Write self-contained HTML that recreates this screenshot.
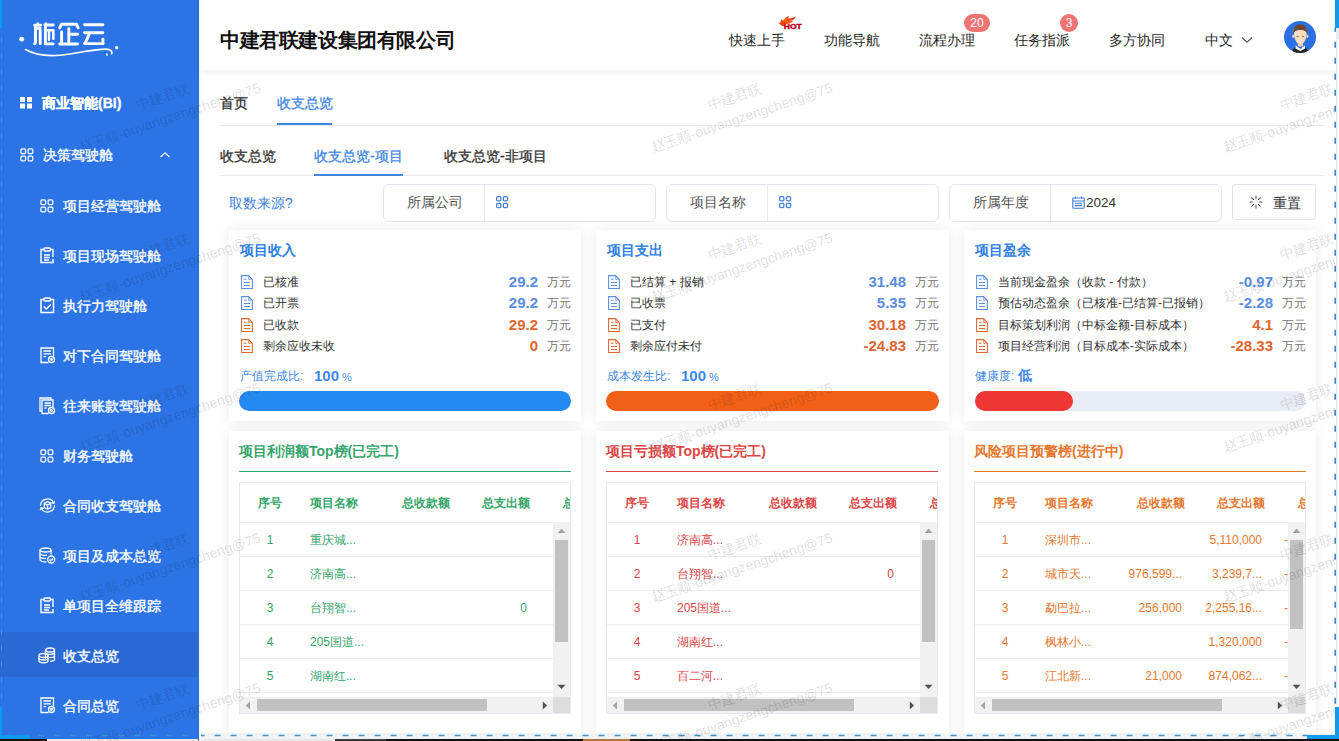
<!DOCTYPE html>
<html><head><meta charset="utf-8">
<style>
*{margin:0;padding:0;box-sizing:border-box;}
html,body{width:1339px;height:741px;overflow:hidden;background:#fff;font-family:"Liberation Sans",sans-serif;position:relative;}
.a{position:absolute;white-space:nowrap;}
#side{position:absolute;left:0;top:0;width:199px;height:741px;background:#2c74e6;color:#fff;}
.mi{position:absolute;left:0;width:199px;height:50px;}
.mi .t{position:absolute;top:15px;font-size:14px;line-height:20px;font-weight:500;color:#fff;white-space:nowrap;-webkit-text-stroke:0.35px #fff;}
.md{-webkit-text-stroke:0.3px currentColor;}
.mi svg{position:absolute;}
#hdr{position:absolute;left:199px;top:0;width:1140px;height:70px;background:#fff;box-shadow:0 2px 7px rgba(0,0,0,0.07);}
.nav{position:absolute;top:31px;font-size:13.5px;line-height:20px;color:#262626;white-space:nowrap;}
.badge{position:absolute;height:18px;border-radius:9px;background:#ef7474;color:#fff;font-size:12px;line-height:18px;text-align:center;}
.t14{font-size:14px;line-height:20px;}
.card{position:absolute;background:#fff;box-shadow:0 0 12px rgba(0,0,0,0.085);}
.box{position:absolute;top:184px;height:38px;border:1px solid #e3e6ec;border-radius:6px;background:#fff;}
.box .lb{position:absolute;top:8px;font-size:13.5px;line-height:20px;color:#555;}
.box .dv{position:absolute;top:0;width:1px;height:36px;background:#e8ebf0;}
.ct{position:absolute;top:10px;left:11px;font-size:14px;line-height:20px;font-weight:bold;}
.row{position:absolute;left:11px;right:10px;height:20px;}
.row svg{position:absolute;left:1px;top:3px;}
.row .l{position:absolute;left:23px;top:0;font-size:12px;line-height:20px;color:#333;}
.row .v{position:absolute;right:33px;top:0;font-size:15px;line-height:20px;font-weight:bold;}
.row .u{position:absolute;right:0;top:0;font-size:12px;line-height:20px;color:#777;}
.ttl{position:absolute;left:10px;top:10px;font-size:14px;line-height:20px;font-weight:bold;}
.uline{position:absolute;left:10px;top:40px;width:332px;height:1px;}
.tbl{position:absolute;left:10px;top:51px;width:332px;height:232px;border:1px solid #e6e9ef;overflow:hidden;}
.th{position:absolute;top:13px;font-size:12px;line-height:20px;font-weight:bold;}
.td{position:absolute;font-size:12px;line-height:20px;}
.rl{position:absolute;left:0;width:314px;height:1px;background:#e9ecf1;}
.wmk{position:absolute;width:300px;height:44px;text-align:center;font-size:14px;line-height:22px;color:rgba(0,0,0,0.14);transform:rotate(-18.5deg);white-space:nowrap;}
</style></head><body>

<!-- ============ SIDEBAR ============ -->
<div id="side">
  <svg class="a" style="left:0;top:0;" width="130" height="65" viewBox="0 0 130 65">
    <circle cx="21.7" cy="39.2" r="2.4" fill="#fff"/>
    <circle cx="116.7" cy="47.8" r="1.7" fill="#fff"/>
    <circle cx="106.9" cy="54.6" r="1.1" fill="#fff"/>
    <path d="M25.5 49.6 C 36 55.5, 50 57.5, 70 54 C 85 51.5, 100 48.5, 108 49.3 C 111 49.8, 112.5 51.5, 111.7 53.8" stroke="#fff" stroke-width="1.7" fill="none" stroke-linecap="round"/>
    <g stroke="#fff" stroke-width="2.9" fill="none" stroke-linecap="round" stroke-linejoin="round">
      <path d="M34.7 25.2 H40.6"/>
      <path d="M37.7 23.4 V25" stroke-width="2.2"/>
      <path d="M35.5 26.5 V42.5 L34.6 43.8"/>
      <path d="M38.3 28.4 H40.2 V43.7"/>
      <path d="M44.9 25 H53.2"/>
      <path d="M45.9 23.3 V25" stroke-width="2.2"/>
      <path d="M45.4 27 V43.9 H53.2"/>
      <path d="M47.6 30.3 H53.3 V38.8" stroke-width="2.6"/>
      <path d="M49 31.5 V39.8" stroke-width="2.4"/>
      <path d="M59.7 27.9 L61.4 24.3 H76.6 L78.2 27.8"/>
      <path d="M68.8 28.6 V43"/>
      <path d="M61.6 32 V42.2"/>
      <path d="M71 34.2 H77.6"/>
      <path d="M59.8 44 H77.6"/>
      <path d="M84.6 24.7 H102.9"/>
      <path d="M84.6 32.8 H102.9"/>
      <path d="M89.3 34 L85.1 43.4"/>
      <path d="M84.6 43.6 H102.9"/>
      <path d="M102.9 39.3 V43.6"/>
    </g>
  </svg>

  <div class="mi" style="top:78px;">
    <svg style="left:20px;top:19px;" width="13" height="12" viewBox="0 0 13 12"><rect x="0" y="0" width="5" height="5" fill="#fff"/><rect x="7" y="0" width="5" height="5" fill="#fff"/><rect x="0" y="6.5" width="5" height="5" fill="#fff"/><rect x="7" y="6.5" width="5" height="5" fill="#fff"/></svg>
    <span class="t" style="left:42px;font-weight:bold;">商业智能(BI)</span></div>

  <div class="mi" style="top:130px;">
    <svg style="left:19.5px;top:18px;" width="14" height="14" viewBox="0 0 14 14" fill="none" stroke="#fff" stroke-width="1.25"><rect x="0.9" y="0.9" width="4.7" height="4.7" rx="1.1"/><rect x="8.1" y="0.9" width="4.7" height="4.7" rx="1.1"/><rect x="0.9" y="8.1" width="4.7" height="4.7" rx="1.1"/><rect x="8.1" y="8.1" width="4.7" height="4.7" rx="1.1"/></svg>
    <span class="t" style="left:43px;">决策驾驶舱</span>
    <svg style="left:159px;top:21px;" width="12" height="8" viewBox="0 0 12 8"><path d="M1.5 6 L6 1.8 L10.5 6" stroke="#fff" stroke-width="1.2" fill="none"/></svg>
  </div>

  <div class="mi" style="top:181px;">
    <svg style="left:39.5px;top:18px;" width="14" height="14" viewBox="0 0 14 14" fill="none" stroke="#fff" stroke-width="1.25"><rect x="0.9" y="0.9" width="4.7" height="4.7" rx="1.1"/><rect x="8.1" y="0.9" width="4.7" height="4.7" rx="1.1"/><rect x="0.9" y="8.1" width="4.7" height="4.7" rx="1.1"/><rect x="8.1" y="8.1" width="4.7" height="4.7" rx="1.1"/></svg>
    <span class="t" style="left:63px;">项目经营驾驶舱</span></div>

  <div class="mi" style="top:231px;">
    <svg style="left:40px;top:16px;" width="15" height="17" viewBox="0 0 15 17" fill="none" stroke="#fff" stroke-width="1.4"><path d="M4 2.5 H1 V15.5 H13 V12"/><path d="M10.5 2.5 H13 V10"/><rect x="4" y="1" width="6.5" height="3" rx="1"/><path d="M4 8 H10 M4 10.5 H10 M4 13 H9"/></svg>
    <span class="t" style="left:63px;">项目现场驾驶舱</span></div>

  <div class="mi" style="top:281px;">
    <svg style="left:40px;top:16px;" width="15" height="17" viewBox="0 0 15 17" fill="none" stroke="#fff" stroke-width="1.5"><path d="M4 2.5 H1 V15.5 H13.5 V2.5 H10.5"/><rect x="4" y="1" width="6.5" height="3" rx="1"/><path d="M3.8 9.5 L6.3 12 L10.8 7.5"/></svg>
    <span class="t" style="left:63px;">执行力驾驶舱</span></div>

  <div class="mi" style="top:331px;">
    <svg style="left:40px;top:16px;" width="16" height="17" viewBox="0 0 16 17" fill="none" stroke="#fff" stroke-width="1.3"><path d="M8.5 15.5 H1 V1 H13.5 V9"/><path d="M3.5 4 H11 M3.5 6.8 H11 M3.5 9.6 H6"/><circle cx="11.5" cy="12.5" r="3"/><circle cx="11.5" cy="12.5" r="0.8" fill="#fff"/></svg>
    <span class="t" style="left:63px;">对下合同驾驶舱</span></div>

  <div class="mi" style="top:381px;">
    <svg style="left:39px;top:16px;" width="17" height="18" viewBox="0 0 17 18" fill="none" stroke="#fff" stroke-width="1.3"><path d="M3 14 H1 V1 H12 V2.5"/><path d="M9.5 16.5 H3 V3 H14 V10"/><path d="M5.5 6 H12 M5.5 8.5 H12 M5.5 11 H7.5"/><circle cx="12.5" cy="13.5" r="3"/><circle cx="12.5" cy="13.5" r="0.8" fill="#fff"/></svg>
    <span class="t" style="left:63px;">往来账款驾驶舱</span></div>

  <div class="mi" style="top:431px;">
    <svg style="left:39.5px;top:18px;" width="14" height="14" viewBox="0 0 14 14" fill="none" stroke="#fff" stroke-width="1.25"><rect x="0.9" y="0.9" width="4.7" height="4.7" rx="1.1"/><rect x="8.1" y="0.9" width="4.7" height="4.7" rx="1.1"/><rect x="0.9" y="8.1" width="4.7" height="4.7" rx="1.1"/><rect x="8.1" y="8.1" width="4.7" height="4.7" rx="1.1"/></svg>
    <span class="t" style="left:63px;">财务驾驶舱</span></div>

  <div class="mi" style="top:481px;">
    <svg style="left:39px;top:16px;" width="17" height="17" viewBox="0 0 17 17" fill="none" stroke="#fff" stroke-width="1.2" stroke-linecap="round" stroke-linejoin="round"><path d="M1.5 8.5 A7 7 0 0 1 14.8 6"/><path d="M12.8 5.6 L14.9 6.3 L15.7 4.2"/><path d="M15.5 8.5 A7 7 0 0 1 2.2 11"/><path d="M4.2 11.4 L2.1 10.7 L1.3 12.8"/><path d="M8.5 4.6 L11.8 6.4 V10.4 L8.5 12.2 L5.2 10.4 V6.4 Z M5.2 6.4 L8.5 8.2 L11.8 6.4 M8.5 8.2 V12.2"/></svg>
    <span class="t" style="left:63px;">合同收支驾驶舱</span></div>

  <div class="mi" style="top:531px;">
    <svg style="left:39px;top:16px;" width="17" height="17" viewBox="0 0 17 17" fill="none" stroke="#fff" stroke-width="1.3"><ellipse cx="6.5" cy="3" rx="5.5" ry="2"/><path d="M1 3 V12.5 C1 14 4 15 7.5 14.8"/><path d="M12 3 V7.5"/><path d="M1 6.3 C1 8 5 8.6 8 8.2"/><path d="M1 9.5 C1 11 4 11.6 7 11.4"/><circle cx="12.2" cy="12.5" r="3.5"/><path d="M10.5 12.6 L11.8 13.8 L14 11.5"/></svg>
    <span class="t" style="left:63px;">项目及成本总览</span></div>

  <div class="mi" style="top:581px;">
    <svg style="left:40px;top:16px;" width="15" height="17" viewBox="0 0 15 17" fill="none" stroke="#fff" stroke-width="1.4"><path d="M4 2.5 H1 V15.5 H13 V12"/><path d="M10.5 2.5 H13 V10"/><rect x="4" y="1" width="6.5" height="3" rx="1"/><path d="M4 8 H10 M4 10.5 H10 M4 13 H9"/></svg>
    <span class="t" style="left:63px;">单项目全维跟踪</span></div>

  <div class="mi" style="top:632px;height:45px;background:#2a69d3;">
    <svg style="left:38px;top:15px;" width="18" height="17" viewBox="0 0 18 17" fill="none" stroke="#fff" stroke-width="1.3"><ellipse cx="12" cy="3" rx="4.5" ry="2"/><path d="M7.5 3 V12 M16.5 3 V12.5 C16.5 13.5 14.5 14.3 12 14.3"/><path d="M7.5 6 C8 7 10 7.3 12 7.3 C14.5 7.3 16.5 6.5 16.5 6"/><path d="M11 10.5 C13 10.6 16 10 16.5 9.3"/><ellipse cx="5.5" cy="8.5" rx="4.5" ry="2"/><path d="M1 8.5 V14 C1 15 3 15.8 5.5 15.8 C8 15.8 10 15 10 14 V8.5"/><path d="M1 11.3 C1 12.3 3 13 5.5 13 C8 13 10 12.3 10 11.3"/></svg>
    <span class="t" style="left:63px;top:14px;">收支总览</span></div>

  <div class="mi" style="top:681px;">
    <svg style="left:40px;top:16px;" width="16" height="17" viewBox="0 0 16 17" fill="none" stroke="#fff" stroke-width="1.3"><path d="M8.5 15.5 H1 V1 H13.5 V9"/><path d="M3.5 4 H11 M3.5 6.8 H11 M3.5 9.6 H6"/><circle cx="11.5" cy="12.5" r="3"/><circle cx="11.5" cy="12.5" r="0.8" fill="#fff"/></svg>
    <span class="t" style="left:63px;">合同总览</span></div>
</div>

<div class="a" style="left:198px;top:0;width:1px;height:741px;background:#3a6cc2;z-index:5;"></div>
<div class="a" style="left:199px;top:0;width:1px;height:741px;background:#e4fbff;z-index:5;"></div>
<div class="a" style="left:200px;top:0;width:1px;height:741px;background:#f4feff;z-index:5;"></div>
<!-- ============ HEADER ============ -->
<div id="hdr">
  <div class="a" style="left:21px;top:26px;font-size:20px;font-weight:bold;line-height:28px;color:#111;letter-spacing:-0.4px;">中建君联建设集团有限公司</div>
  <div class="nav" style="left:530px;">快速上手</div>
  <svg class="a" style="left:578px;top:15px;" width="27" height="16" viewBox="0 0 27 16"><defs><linearGradient id="fl" x1="0" y1="1" x2="1" y2="0"><stop offset="0" stop-color="#d01a0a"/><stop offset="0.5" stop-color="#f86010"/><stop offset="1" stop-color="#e02010"/></linearGradient></defs><path d="M0.4 7.1 L3 8.2 L4.5 4.1 L6.3 5.6 C8 3.2 10 1.6 11.9 1.1 L11.2 3.6 C14 3.6 17 2.6 19 1.6 C18 4 16 5.5 13.5 6.1 L16.3 6.7 C14 8 11.5 8.6 9.2 9 L5.5 11.2 C4 10 2 8.5 0.4 7.1 Z" fill="url(#fl)"/><text x="6.8" y="13.9" font-family="Liberation Sans" font-weight="bold" font-size="7.2" textLength="18" lengthAdjust="spacingAndGlyphs" fill="#c2001c" stroke="#c2001c" stroke-width="0.45">HOT</text></svg>
  <div class="nav" style="left:625px;">功能导航</div>
  <div class="nav" style="left:720px;">流程办理</div>
  <div class="badge" style="left:765px;top:14px;width:26px;">20</div>
  <div class="nav" style="left:815px;">任务指派</div>
  <div class="badge" style="left:861px;top:14px;width:18px;">3</div>
  <div class="nav" style="left:910px;">多方协同</div>
  <div class="nav" style="left:1006px;">中文</div>
  <svg class="a" style="left:1042px;top:36px;" width="12" height="8" viewBox="0 0 12 8"><path d="M1 1.5 L6 6.3 L11 1.5" stroke="#444" stroke-width="1.05" fill="none"/></svg>
  <svg class="a" style="left:1085px;top:21px;" width="32" height="32" viewBox="0 0 32 32">
    <defs><clipPath id="cc"><circle cx="16" cy="16" r="16"/></clipPath></defs>
    <circle cx="16" cy="16" r="16" fill="#2b70e2"/>
    <g clip-path="url(#cc)">
      <path d="M7.5 33 C8 28.5 10.5 26.5 13 25.5 L16.3 29 L19.5 25.5 C22 26.5 24.5 28.5 25 33 Z" fill="#252525"/>
      <rect x="13.8" y="20.5" width="5.2" height="5" fill="#f1cfb2"/>
      <path d="M11.8 24.5 L16.3 28 L20.8 24.5 L21.2 27.5 L16.3 30 L11.4 27.5 Z" fill="#fff"/>
      <ellipse cx="9.3" cy="15.3" rx="1.1" ry="1.8" fill="#efcdb0"/>
      <ellipse cx="23.3" cy="15.3" rx="1.1" ry="1.8" fill="#efcdb0"/>
      <path d="M9.7 8 C9.6 18.5 12.5 23.2 16.3 23.2 C20.1 23.2 23 18.5 22.9 8 Z" fill="#f8dcc2"/>
      <path d="M9.4 13.5 C8.8 7 11 3.2 16.3 3.2 C21.6 3.2 23.8 7 23.2 13.5 C22.5 10.5 21 9 16.3 9 C11.6 9 10.1 10.5 9.4 13.5 Z" fill="#6e4a35"/>
      <path d="M12.4 15.6 H14.6 M18 15.6 H20.2" stroke="#6a5040" stroke-width="0.8"/>
    </g>
  </svg>
</div>

<!-- ============ TABS ============ -->
<div class="a t14 md" style="left:220px;top:93px;color:#333;">首页</div>
<div class="a t14 md" style="left:277px;top:93px;color:#3f87e5;">收支总览</div>
<div class="a" style="left:219px;top:125px;width:1106px;height:1px;background:#e9ebef;"></div>
<div class="a" style="left:277px;top:123px;width:55px;height:2px;background:#3f87e5;"></div>
<div class="a t14 md" style="left:220px;top:146px;color:#333;">收支总览</div>
<div class="a t14 md" style="left:314px;top:146px;color:#3f87e5;">收支总览-项目</div>
<div class="a t14 md" style="left:444px;top:146px;color:#333;">收支总览-非项目</div>
<div class="a" style="left:219px;top:175px;width:1106px;height:1px;background:#e9ebef;"></div>
<div class="a" style="left:314px;top:174px;width:89px;height:2px;background:#3f87e5;"></div>

<!-- ============ FILTERS ============ -->
<div class="a t14" style="left:229px;top:193px;color:#3f7fd9;">取数来源?</div>
<div class="box" style="left:383px;width:273px;">
  <span class="lb" style="left:23px;">所属公司</span><div class="dv" style="left:100px;"></div>
  <svg class="a" style="left:112px;top:11px;" width="13" height="13" viewBox="0 0 13 13" fill="none" stroke="#4a80d6" stroke-width="1.3"><rect x="0.65" y="0.65" width="4.2" height="4.2" rx="1"/><rect x="7.35" y="0.65" width="4.2" height="4.2" rx="1"/><rect x="0.65" y="7.35" width="4.2" height="4.2" rx="1"/><rect x="7.35" y="7.35" width="4.2" height="4.2" rx="1"/></svg>
</div>
<div class="box" style="left:666px;width:273px;">
  <span class="lb" style="left:23px;">项目名称</span><div class="dv" style="left:100px;"></div>
  <svg class="a" style="left:112px;top:11px;" width="13" height="13" viewBox="0 0 13 13" fill="none" stroke="#4a80d6" stroke-width="1.3"><rect x="0.65" y="0.65" width="4.2" height="4.2" rx="1"/><rect x="7.35" y="0.65" width="4.2" height="4.2" rx="1"/><rect x="0.65" y="7.35" width="4.2" height="4.2" rx="1"/><rect x="7.35" y="7.35" width="4.2" height="4.2" rx="1"/></svg>
</div>
<div class="box" style="left:949px;width:273px;">
  <span class="lb" style="left:23px;">所属年度</span><div class="dv" style="left:100px;"></div>
  <svg class="a" style="left:122px;top:11px;" width="13" height="13" viewBox="0 0 13 13" fill="none" stroke="#3f7fd9" stroke-width="1.1"><rect x="0.8" y="2" width="11.4" height="10.2" rx="0.8"/><path d="M0.8 5 H12.2 M3.5 0.5 V2.5 M9.5 0.5 V2.5 M3 7.2 H10 M3 9.6 H10"/></svg>
  <span class="a" style="left:136px;top:8px;font-size:13.5px;line-height:20px;color:#333;">2024</span>
</div>
<div class="a" style="left:1232px;top:184px;width:84px;height:36px;border:1px solid #dfe3e9;border-radius:3px;background:#fff;">
  <svg class="a" style="left:16px;top:10px;" width="14" height="14" viewBox="0 0 14 14" stroke="#555" stroke-width="1.1" stroke-linecap="round"><path d="M7 1 V3.5 M7 10.5 V13 M1 7 H3.5 M10.5 7 H13 M2.8 2.8 L4.5 4.5 M9.5 9.5 L11.2 11.2 M2.8 11.2 L4.5 9.5 M9.5 4.5 L11.2 2.8"/></svg>
  <span class="a" style="left:40px;top:8px;font-size:14px;line-height:20px;color:#333;">重置</span>
</div>

<!-- ============ CARDS ROW 1 ============ -->
<div class="card" style="left:229px;top:230px;width:352px;height:191px;">
  <div class="ct" style="color:#2f80e4;">项目收入</div>
<div class="row" style="top:42px;"><svg width="12" height="14" viewBox="0 0 12 14" fill="none" stroke="#5b8de0" stroke-width="1.05"><path d="M0.6 0.6 H7.6 L11.4 4.4 V13.4 H0.6 Z"/><path d="M7.6 0.6 V4.4 H11.4 Z" fill="#5b8de0" fill-opacity="0.35" stroke-width="0.6"/><path d="M3 4.2 H5.4 M3 7.5 H9 M3 10.5 H9"/></svg><span class="l">已核准</span><span class="v" style="color:#5b8de0;">29.2</span><span class="u">万元</span></div>
<div class="row" style="top:63px;"><svg width="12" height="14" viewBox="0 0 12 14" fill="none" stroke="#5b8de0" stroke-width="1.05"><path d="M0.6 0.6 H7.6 L11.4 4.4 V13.4 H0.6 Z"/><path d="M7.6 0.6 V4.4 H11.4 Z" fill="#5b8de0" fill-opacity="0.35" stroke-width="0.6"/><path d="M3 4.2 H5.4 M3 7.5 H9 M3 10.5 H9"/></svg><span class="l">已开票</span><span class="v" style="color:#5b8de0;">29.2</span><span class="u">万元</span></div>
<div class="row" style="top:85px;"><svg width="12" height="14" viewBox="0 0 12 14" fill="none" stroke="#e0662f" stroke-width="1.05"><path d="M0.6 0.6 H7.6 L11.4 4.4 V13.4 H0.6 Z"/><path d="M7.6 0.6 V4.4 H11.4 Z" fill="#e0662f" fill-opacity="0.35" stroke-width="0.6"/><path d="M3 4.2 H5.4 M3 7.5 H9 M3 10.5 H9"/></svg><span class="l">已收款</span><span class="v" style="color:#e0662f;">29.2</span><span class="u">万元</span></div>
<div class="row" style="top:106px;"><svg width="12" height="14" viewBox="0 0 12 14" fill="none" stroke="#e0662f" stroke-width="1.05"><path d="M0.6 0.6 H7.6 L11.4 4.4 V13.4 H0.6 Z"/><path d="M7.6 0.6 V4.4 H11.4 Z" fill="#e0662f" fill-opacity="0.35" stroke-width="0.6"/><path d="M3 4.2 H5.4 M3 7.5 H9 M3 10.5 H9"/></svg><span class="l">剩余应收未收</span><span class="v" style="color:#e0662f;">0</span><span class="u">万元</span></div>
<div class="a" style="left:11px;top:136px;font-size:12px;line-height:20px;color:#3f87e5;">产值完成比:</div><div class="a" style="left:85px;top:136px;font-size:15px;line-height:20px;font-weight:bold;color:#3f87e5;">100</div><div class="a" style="left:113px;top:137px;font-size:11px;line-height:20px;color:#3f87e5;">%</div><div class="a" style="left:10px;top:161px;width:332px;height:20px;border-radius:10px;background:#2489f0;"></div></div>
<div class="card" style="left:596px;top:230px;width:353px;height:191px;">
  <div class="ct" style="color:#2f80e4;">项目支出</div>
<div class="row" style="top:42px;"><svg width="12" height="14" viewBox="0 0 12 14" fill="none" stroke="#5b8de0" stroke-width="1.05"><path d="M0.6 0.6 H7.6 L11.4 4.4 V13.4 H0.6 Z"/><path d="M7.6 0.6 V4.4 H11.4 Z" fill="#5b8de0" fill-opacity="0.35" stroke-width="0.6"/><path d="M3 4.2 H5.4 M3 7.5 H9 M3 10.5 H9"/></svg><span class="l">已结算 + 报销</span><span class="v" style="color:#5b8de0;">31.48</span><span class="u">万元</span></div>
<div class="row" style="top:63px;"><svg width="12" height="14" viewBox="0 0 12 14" fill="none" stroke="#5b8de0" stroke-width="1.05"><path d="M0.6 0.6 H7.6 L11.4 4.4 V13.4 H0.6 Z"/><path d="M7.6 0.6 V4.4 H11.4 Z" fill="#5b8de0" fill-opacity="0.35" stroke-width="0.6"/><path d="M3 4.2 H5.4 M3 7.5 H9 M3 10.5 H9"/></svg><span class="l">已收票</span><span class="v" style="color:#5b8de0;">5.35</span><span class="u">万元</span></div>
<div class="row" style="top:85px;"><svg width="12" height="14" viewBox="0 0 12 14" fill="none" stroke="#e0662f" stroke-width="1.05"><path d="M0.6 0.6 H7.6 L11.4 4.4 V13.4 H0.6 Z"/><path d="M7.6 0.6 V4.4 H11.4 Z" fill="#e0662f" fill-opacity="0.35" stroke-width="0.6"/><path d="M3 4.2 H5.4 M3 7.5 H9 M3 10.5 H9"/></svg><span class="l">已支付</span><span class="v" style="color:#e0662f;">30.18</span><span class="u">万元</span></div>
<div class="row" style="top:106px;"><svg width="12" height="14" viewBox="0 0 12 14" fill="none" stroke="#e0662f" stroke-width="1.05"><path d="M0.6 0.6 H7.6 L11.4 4.4 V13.4 H0.6 Z"/><path d="M7.6 0.6 V4.4 H11.4 Z" fill="#e0662f" fill-opacity="0.35" stroke-width="0.6"/><path d="M3 4.2 H5.4 M3 7.5 H9 M3 10.5 H9"/></svg><span class="l">剩余应付未付</span><span class="v" style="color:#e0662f;">-24.83</span><span class="u">万元</span></div>
<div class="a" style="left:11px;top:136px;font-size:12px;line-height:20px;color:#3f87e5;">成本发生比:</div><div class="a" style="left:85px;top:136px;font-size:15px;line-height:20px;font-weight:bold;color:#3f87e5;">100</div><div class="a" style="left:113px;top:137px;font-size:11px;line-height:20px;color:#3f87e5;">%</div><div class="a" style="left:10px;top:161px;width:333px;height:20px;border-radius:10px;background:#f26018;"></div></div>
<div class="card" style="left:964px;top:230px;width:352px;height:191px;">
  <div class="ct" style="color:#2f80e4;">项目盈余</div>
<div class="row" style="top:42px;"><svg width="12" height="14" viewBox="0 0 12 14" fill="none" stroke="#5b8de0" stroke-width="1.05"><path d="M0.6 0.6 H7.6 L11.4 4.4 V13.4 H0.6 Z"/><path d="M7.6 0.6 V4.4 H11.4 Z" fill="#5b8de0" fill-opacity="0.35" stroke-width="0.6"/><path d="M3 4.2 H5.4 M3 7.5 H9 M3 10.5 H9"/></svg><span class="l">当前现金盈余（收款 - 付款）</span><span class="v" style="color:#5b8de0;">-0.97</span><span class="u">万元</span></div>
<div class="row" style="top:63px;"><svg width="12" height="14" viewBox="0 0 12 14" fill="none" stroke="#5b8de0" stroke-width="1.05"><path d="M0.6 0.6 H7.6 L11.4 4.4 V13.4 H0.6 Z"/><path d="M7.6 0.6 V4.4 H11.4 Z" fill="#5b8de0" fill-opacity="0.35" stroke-width="0.6"/><path d="M3 4.2 H5.4 M3 7.5 H9 M3 10.5 H9"/></svg><span class="l">预估动态盈余（已核准-已结算-已报销）</span><span class="v" style="color:#5b8de0;">-2.28</span><span class="u">万元</span></div>
<div class="row" style="top:85px;"><svg width="12" height="14" viewBox="0 0 12 14" fill="none" stroke="#e0662f" stroke-width="1.05"><path d="M0.6 0.6 H7.6 L11.4 4.4 V13.4 H0.6 Z"/><path d="M7.6 0.6 V4.4 H11.4 Z" fill="#e0662f" fill-opacity="0.35" stroke-width="0.6"/><path d="M3 4.2 H5.4 M3 7.5 H9 M3 10.5 H9"/></svg><span class="l">目标策划利润（中标金额-目标成本）</span><span class="v" style="color:#e0662f;">4.1</span><span class="u">万元</span></div>
<div class="row" style="top:106px;"><svg width="12" height="14" viewBox="0 0 12 14" fill="none" stroke="#e0662f" stroke-width="1.05"><path d="M0.6 0.6 H7.6 L11.4 4.4 V13.4 H0.6 Z"/><path d="M7.6 0.6 V4.4 H11.4 Z" fill="#e0662f" fill-opacity="0.35" stroke-width="0.6"/><path d="M3 4.2 H5.4 M3 7.5 H9 M3 10.5 H9"/></svg><span class="l">项目经营利润（目标成本-实际成本）</span><span class="v" style="color:#e0662f;">-28.33</span><span class="u">万元</span></div>
<div class="a" style="left:11px;top:136px;font-size:12px;line-height:20px;color:#3f87e5;">健康度:</div><div class="a" style="left:54px;top:135px;font-size:14px;line-height:20px;font-weight:bold;color:#3f87e5;">低</div><div class="a" style="left:11px;top:161px;width:331px;height:20px;border-radius:10px;background:#e9edf5;"></div><div class="a" style="left:11px;top:161px;width:98px;height:20px;border-radius:10px;background:#ef3636;"></div></div>

<!-- ============ CARDS ROW 2 ============ -->
<div class="card" style="left:229px;top:431px;width:352px;height:320px;">
  <div class="ttl" style="color:#35a56b;">项目利润额Top榜(已完工)</div>
  <div class="uline" style="background:#35a56b;"></div>
<div class="tbl"><div class="th" style="left:0;width:60px;text-align:center;top:10px;color:#35a56b;">序号</div><div class="th" style="left:70px;top:10px;color:#35a56b;">项目名称</div><div class="th" style="left:150px;width:60px;text-align:right;top:10px;color:#35a56b;">总收款额</div><div class="th" style="left:230px;width:60px;text-align:right;top:10px;color:#35a56b;">总支出额</div><div class="th" style="left:323px;top:10px;color:#35a56b;">总</div><div class="rl" style="top:39px;width:330px;"></div><div class="td" style="left:0;width:60px;text-align:center;top:47px;color:#35a56b;">1</div><div class="td" style="left:70px;top:47px;color:#35a56b;">重庆城...</div><div class="rl" style="top:73px;"></div><div class="td" style="left:0;width:60px;text-align:center;top:81px;color:#35a56b;">2</div><div class="td" style="left:70px;top:81px;color:#35a56b;">济南高...</div><div class="rl" style="top:107px;"></div><div class="td" style="left:0;width:60px;text-align:center;top:115px;color:#35a56b;">3</div><div class="td" style="left:70px;top:115px;color:#35a56b;">台翔智...</div><div class="td" style="left:187px;width:100px;text-align:right;top:115px;color:#35a56b;">0</div><div class="rl" style="top:141px;"></div><div class="td" style="left:0;width:60px;text-align:center;top:149px;color:#35a56b;">4</div><div class="td" style="left:70px;top:149px;color:#35a56b;">205国道...</div><div class="rl" style="top:175px;"></div><div class="td" style="left:0;width:60px;text-align:center;top:183px;color:#35a56b;">5</div><div class="td" style="left:70px;top:183px;color:#35a56b;">湖南红...</div><div class="rl" style="top:209px;"></div><div class="a" style="left:313px;top:39px;width:17px;height:175px;background:#f1f1f1;"></div><div class="a" style="left:315px;top:57px;width:13px;height:102px;background:#c1c1c1;"></div><svg class="a" style="left:317px;top:45px;" width="9" height="6" viewBox="0 0 9 6"><path d="M0.5 5 L4.5 0.8 L8.5 5 Z" fill="#a3a3a3"/></svg><svg class="a" style="left:317px;top:201px;" width="9" height="6" viewBox="0 0 9 6"><path d="M0.5 0.8 L4.5 5 L8.5 0.8 Z" fill="#505050"/></svg><div class="a" style="left:0px;top:214px;width:313px;height:16px;background:#f1f1f1;"></div><div class="a" style="left:17px;top:216px;width:230px;height:12px;background:#c1c1c1;"></div><svg class="a" style="left:5px;top:218px;" width="6" height="9" viewBox="0 0 6 9"><path d="M5 0.5 L0.8 4.5 L5 8.5 Z" fill="#a3a3a3"/></svg><svg class="a" style="left:302px;top:218px;" width="6" height="9" viewBox="0 0 6 9"><path d="M0.8 0.5 L5 4.5 L0.8 8.5 Z" fill="#505050"/></svg><div class="a" style="left:313px;top:214px;width:17px;height:16px;background:#dcdcdc;"></div></div>
</div>
<div class="card" style="left:596px;top:431px;width:353px;height:320px;">
  <div class="ttl" style="color:#dd4646;">项目亏损额Top榜(已完工)</div>
  <div class="uline" style="background:#dd4646;"></div>
<div class="tbl"><div class="th" style="left:0;width:60px;text-align:center;top:10px;color:#dd4646;">序号</div><div class="th" style="left:70px;top:10px;color:#dd4646;">项目名称</div><div class="th" style="left:150px;width:60px;text-align:right;top:10px;color:#dd4646;">总收款额</div><div class="th" style="left:230px;width:60px;text-align:right;top:10px;color:#dd4646;">总支出额</div><div class="th" style="left:323px;top:10px;color:#dd4646;">总</div><div class="rl" style="top:39px;width:330px;"></div><div class="td" style="left:0;width:60px;text-align:center;top:47px;color:#dd4646;">1</div><div class="td" style="left:70px;top:47px;color:#dd4646;">济南高...</div><div class="rl" style="top:73px;"></div><div class="td" style="left:0;width:60px;text-align:center;top:81px;color:#dd4646;">2</div><div class="td" style="left:70px;top:81px;color:#dd4646;">台翔智...</div><div class="td" style="left:187px;width:100px;text-align:right;top:81px;color:#dd4646;">0</div><div class="rl" style="top:107px;"></div><div class="td" style="left:0;width:60px;text-align:center;top:115px;color:#dd4646;">3</div><div class="td" style="left:70px;top:115px;color:#dd4646;">205国道...</div><div class="rl" style="top:141px;"></div><div class="td" style="left:0;width:60px;text-align:center;top:149px;color:#dd4646;">4</div><div class="td" style="left:70px;top:149px;color:#dd4646;">湖南红...</div><div class="rl" style="top:175px;"></div><div class="td" style="left:0;width:60px;text-align:center;top:183px;color:#dd4646;">5</div><div class="td" style="left:70px;top:183px;color:#dd4646;">百二河...</div><div class="rl" style="top:209px;"></div><div class="a" style="left:313px;top:39px;width:17px;height:175px;background:#f1f1f1;"></div><div class="a" style="left:315px;top:57px;width:13px;height:102px;background:#c1c1c1;"></div><svg class="a" style="left:317px;top:45px;" width="9" height="6" viewBox="0 0 9 6"><path d="M0.5 5 L4.5 0.8 L8.5 5 Z" fill="#a3a3a3"/></svg><svg class="a" style="left:317px;top:201px;" width="9" height="6" viewBox="0 0 9 6"><path d="M0.5 0.8 L4.5 5 L8.5 0.8 Z" fill="#505050"/></svg><div class="a" style="left:0px;top:214px;width:313px;height:16px;background:#f1f1f1;"></div><div class="a" style="left:17px;top:216px;width:230px;height:12px;background:#c1c1c1;"></div><svg class="a" style="left:5px;top:218px;" width="6" height="9" viewBox="0 0 6 9"><path d="M5 0.5 L0.8 4.5 L5 8.5 Z" fill="#a3a3a3"/></svg><svg class="a" style="left:302px;top:218px;" width="6" height="9" viewBox="0 0 6 9"><path d="M0.8 0.5 L5 4.5 L0.8 8.5 Z" fill="#505050"/></svg><div class="a" style="left:313px;top:214px;width:17px;height:16px;background:#dcdcdc;"></div></div>
</div>
<div class="card" style="left:964px;top:431px;width:352px;height:320px;">
  <div class="ttl" style="color:#e8772e;">风险项目预警榜(进行中)</div>
  <div class="uline" style="background:#e8772e;"></div>
<div class="tbl"><div class="th" style="left:0;width:60px;text-align:center;top:10px;color:#e8772e;">序号</div><div class="th" style="left:70px;top:10px;color:#e8772e;">项目名称</div><div class="th" style="left:150px;width:60px;text-align:right;top:10px;color:#e8772e;">总收款额</div><div class="th" style="left:230px;width:60px;text-align:right;top:10px;color:#e8772e;">总支出额</div><div class="th" style="left:323px;top:10px;color:#e8772e;">总</div><div class="rl" style="top:39px;width:330px;"></div><div class="td" style="left:0;width:60px;text-align:center;top:47px;color:#e8772e;">1</div><div class="td" style="left:70px;top:47px;color:#e8772e;">深圳市...</div><div class="td" style="left:187px;width:100px;text-align:right;top:47px;color:#e8772e;">5,110,000</div><div class="td" style="left:309px;top:47px;color:#e8772e;">-</div><div class="rl" style="top:73px;"></div><div class="td" style="left:0;width:60px;text-align:center;top:81px;color:#e8772e;">2</div><div class="td" style="left:70px;top:81px;color:#e8772e;">城市天...</div><div class="td" style="left:107px;width:100px;text-align:right;top:81px;color:#e8772e;">976,599...</div><div class="td" style="left:187px;width:100px;text-align:right;top:81px;color:#e8772e;">3,239,7...</div><div class="td" style="left:309px;top:81px;color:#e8772e;">-</div><div class="rl" style="top:107px;"></div><div class="td" style="left:0;width:60px;text-align:center;top:115px;color:#e8772e;">3</div><div class="td" style="left:70px;top:115px;color:#e8772e;">勐巴拉...</div><div class="td" style="left:107px;width:100px;text-align:right;top:115px;color:#e8772e;">256,000</div><div class="td" style="left:187px;width:100px;text-align:right;top:115px;color:#e8772e;">2,255,16...</div><div class="td" style="left:309px;top:115px;color:#e8772e;">-</div><div class="rl" style="top:141px;"></div><div class="td" style="left:0;width:60px;text-align:center;top:149px;color:#e8772e;">4</div><div class="td" style="left:70px;top:149px;color:#e8772e;">枫林小...</div><div class="td" style="left:187px;width:100px;text-align:right;top:149px;color:#e8772e;">1,320,000</div><div class="td" style="left:309px;top:149px;color:#e8772e;">-</div><div class="rl" style="top:175px;"></div><div class="td" style="left:0;width:60px;text-align:center;top:183px;color:#e8772e;">5</div><div class="td" style="left:70px;top:183px;color:#e8772e;">江北新...</div><div class="td" style="left:107px;width:100px;text-align:right;top:183px;color:#e8772e;">21,000</div><div class="td" style="left:187px;width:100px;text-align:right;top:183px;color:#e8772e;">874,062...</div><div class="td" style="left:309px;top:183px;color:#e8772e;">-</div><div class="rl" style="top:209px;"></div><div class="a" style="left:313px;top:39px;width:17px;height:175px;background:#f1f1f1;"></div><div class="a" style="left:315px;top:57px;width:13px;height:89px;background:#c1c1c1;"></div><svg class="a" style="left:317px;top:45px;" width="9" height="6" viewBox="0 0 9 6"><path d="M0.5 5 L4.5 0.8 L8.5 5 Z" fill="#a3a3a3"/></svg><svg class="a" style="left:317px;top:201px;" width="9" height="6" viewBox="0 0 9 6"><path d="M0.5 0.8 L4.5 5 L8.5 0.8 Z" fill="#505050"/></svg><div class="a" style="left:0px;top:214px;width:313px;height:16px;background:#f1f1f1;"></div><div class="a" style="left:17px;top:216px;width:230px;height:12px;background:#c1c1c1;"></div><svg class="a" style="left:5px;top:218px;" width="6" height="9" viewBox="0 0 6 9"><path d="M5 0.5 L0.8 4.5 L5 8.5 Z" fill="#a3a3a3"/></svg><svg class="a" style="left:302px;top:218px;" width="6" height="9" viewBox="0 0 6 9"><path d="M0.8 0.5 L5 4.5 L0.8 8.5 Z" fill="#505050"/></svg><div class="a" style="left:313px;top:214px;width:17px;height:16px;background:#dcdcdc;"></div></div>
</div>

<div id="wm" style="position:absolute;left:0;top:0;width:1335px;height:741px;overflow:hidden;pointer-events:none;z-index:10;">
<div class="wmk" style="left:-556.0px;top:84.5px;">中建君联<br>赵玉顺-ouyangzengcheng@75</div>
<div class="wmk" style="left:16.0px;top:84.5px;">中建君联<br>赵玉顺-ouyangzengcheng@75</div>
<div class="wmk" style="left:588.0px;top:84.5px;">中建君联<br>赵玉顺-ouyangzengcheng@75</div>
<div class="wmk" style="left:1160.0px;top:84.5px;">中建君联<br>赵玉顺-ouyangzengcheng@75</div>
<div class="wmk" style="left:-556.0px;top:234.5px;">中建君联<br>赵玉顺-ouyangzengcheng@75</div>
<div class="wmk" style="left:16.0px;top:234.5px;">中建君联<br>赵玉顺-ouyangzengcheng@75</div>
<div class="wmk" style="left:588.0px;top:234.5px;">中建君联<br>赵玉顺-ouyangzengcheng@75</div>
<div class="wmk" style="left:1160.0px;top:234.5px;">中建君联<br>赵玉顺-ouyangzengcheng@75</div>
<div class="wmk" style="left:-556.0px;top:384.5px;">中建君联<br>赵玉顺-ouyangzengcheng@75</div>
<div class="wmk" style="left:16.0px;top:384.5px;">中建君联<br>赵玉顺-ouyangzengcheng@75</div>
<div class="wmk" style="left:588.0px;top:384.5px;">中建君联<br>赵玉顺-ouyangzengcheng@75</div>
<div class="wmk" style="left:1160.0px;top:384.5px;">中建君联<br>赵玉顺-ouyangzengcheng@75</div>
<div class="wmk" style="left:-556.0px;top:534.5px;">中建君联<br>赵玉顺-ouyangzengcheng@75</div>
<div class="wmk" style="left:16.0px;top:534.5px;">中建君联<br>赵玉顺-ouyangzengcheng@75</div>
<div class="wmk" style="left:588.0px;top:534.5px;">中建君联<br>赵玉顺-ouyangzengcheng@75</div>
<div class="wmk" style="left:1160.0px;top:534.5px;">中建君联<br>赵玉顺-ouyangzengcheng@75</div>
<div class="wmk" style="left:-556.0px;top:684.5px;">中建君联<br>赵玉顺-ouyangzengcheng@75</div>
<div class="wmk" style="left:16.0px;top:684.5px;">中建君联<br>赵玉顺-ouyangzengcheng@75</div>
<div class="wmk" style="left:588.0px;top:684.5px;">中建君联<br>赵玉顺-ouyangzengcheng@75</div>
<div class="wmk" style="left:1160.0px;top:684.5px;">中建君联<br>赵玉顺-ouyangzengcheng@75</div>
<div class="wmk" style="left:-556.0px;top:834.5px;">中建君联<br>赵玉顺-ouyangzengcheng@75</div>
<div class="wmk" style="left:16.0px;top:834.5px;">中建君联<br>赵玉顺-ouyangzengcheng@75</div>
<div class="wmk" style="left:588.0px;top:834.5px;">中建君联<br>赵玉顺-ouyangzengcheng@75</div>
<div class="wmk" style="left:1160.0px;top:834.5px;">中建君联<br>赵玉顺-ouyangzengcheng@75</div>
</div>
<!-- selection overlay -->
<div class="a" style="left:199px;top:733px;width:1136px;height:6px;background:#f3f3f3;"></div>
<div class="a" style="left:1335px;top:0;width:4px;height:28px;background:#0d9bf2;"></div>
<div class="a" style="left:0;top:0;width:2px;height:28px;background:#0d9bf2;"></div>
<div class="a" style="left:1336px;top:28px;width:3px;height:11px;background:#e6ebf5;"></div>
<div class="a" style="left:1336px;top:39px;width:1px;height:696px;background:#dfe5ee;"></div>
<svg class="a" style="left:0;top:0;" width="1339" height="741"><line x1="1335.2" y1="28" x2="1335.2" y2="707" stroke="#2a7fc4" stroke-width="1.5" stroke-dasharray="6 10" stroke-dashoffset="2.3"/><line x1="0" y1="735.5" x2="1307" y2="735.5" stroke="#3596d6" stroke-width="1.5" stroke-dasharray="6 10" stroke-dashoffset="9.5"/><line x1="1.5" y1="28" x2="1.5" y2="707" stroke="#3196f2" stroke-width="1" stroke-dasharray="6 10" stroke-dashoffset="7"/></svg>
<div class="a" style="left:1335px;top:707px;width:4px;height:32px;background:#0d9bf2;"></div>
<div class="a" style="left:1307px;top:735px;width:32px;height:4px;background:#0d9bf2;"></div>
<div class="a" style="left:0;top:707px;width:2px;height:32px;background:#0d9bf2;"></div>
<div class="a" style="left:0;top:735px;width:30px;height:4px;background:#0d9bf2;"></div>
<div class="a" style="left:0;top:739px;width:1339px;height:2px;background:#141414;"></div>
<div class="a" style="left:47px;top:739px;width:288px;height:2px;background:#e8e8e8;"></div>
<div class="a" style="left:335px;top:739px;width:51px;height:2px;background:#3a3a3a;"></div>
<div class="a" style="left:583px;top:739px;width:47px;height:2px;background:#b5753c;"></div>
</body></html>
